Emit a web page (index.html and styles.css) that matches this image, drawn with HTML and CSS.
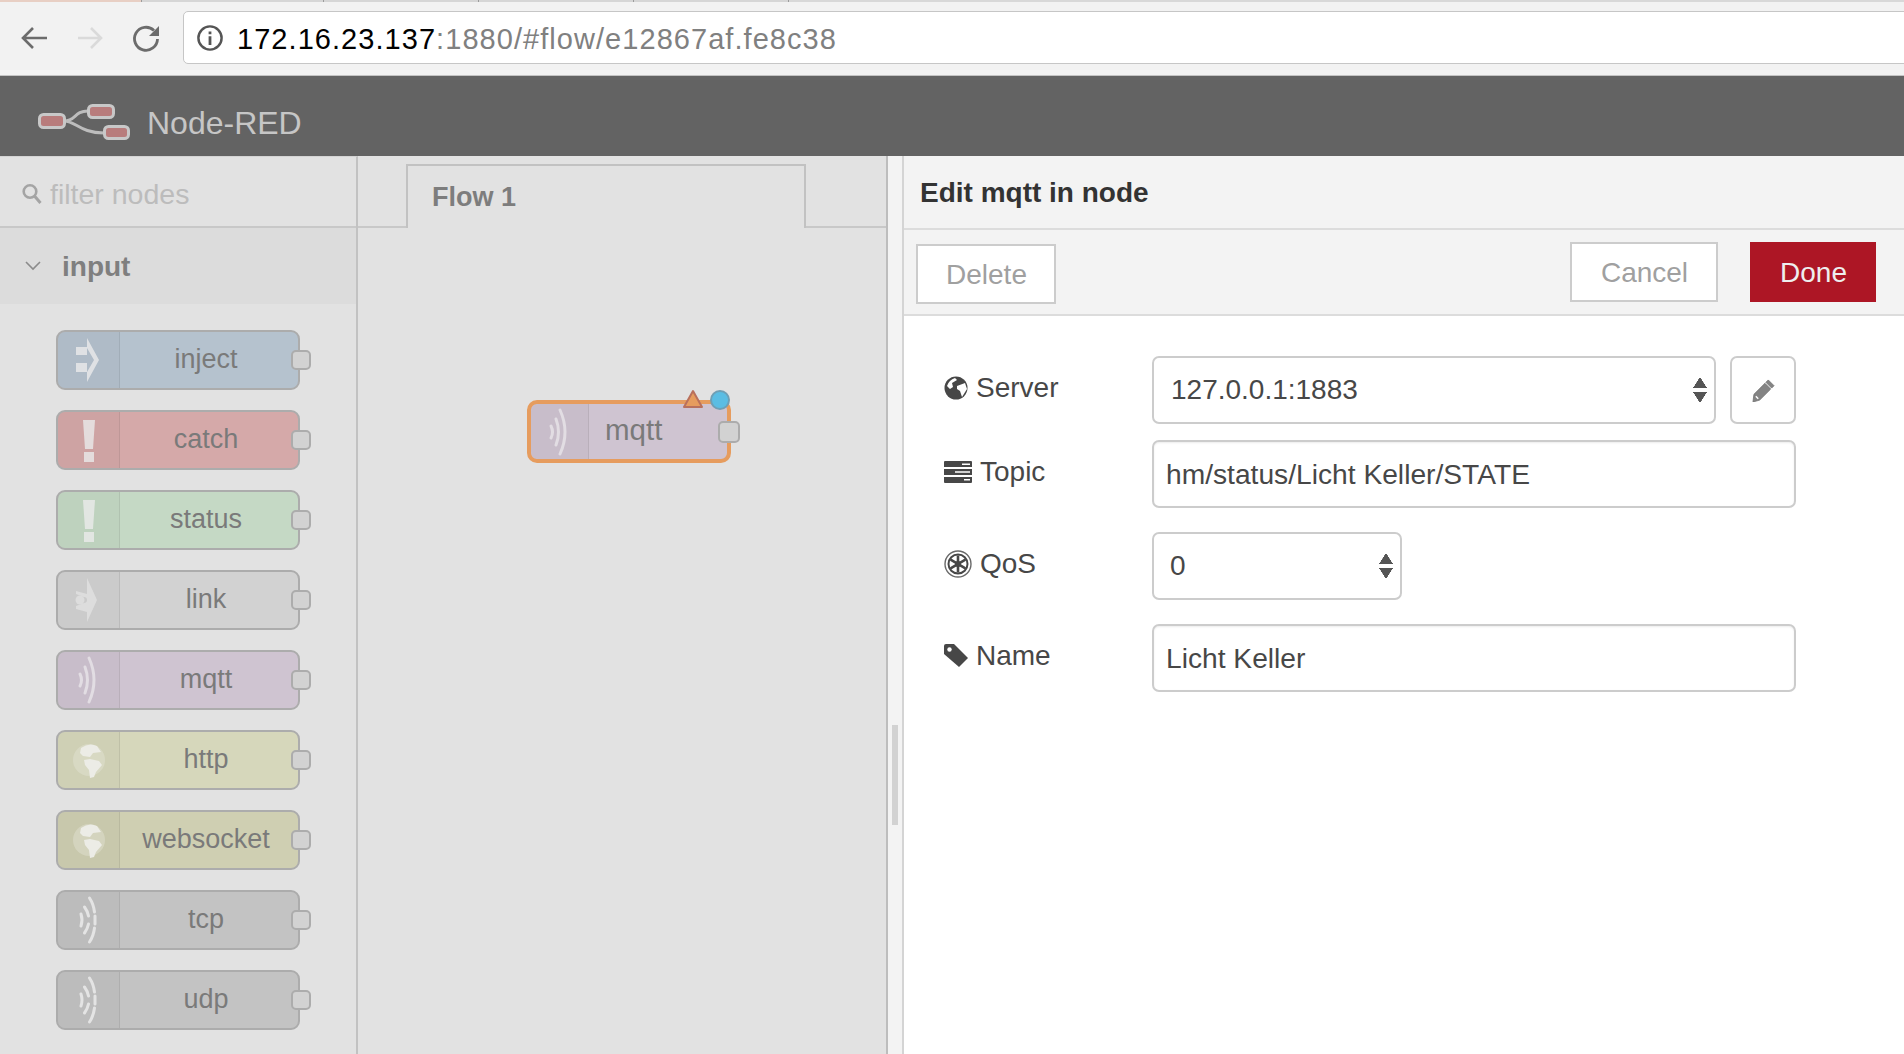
FILE: index.html
```html
<!DOCTYPE html>
<html lang="en">
  <head>
    <meta charset="UTF-8" />
    <title>Node-RED</title>
    <link rel="stylesheet" href="styles.css">
  </head>

  <body>
    <!-- browser chrome -->
    <div class="tab-strip">
      <span class="strip-tab strip-active"></span>
      <span class="strip-tab strip-wide"></span>
      <span class="strip-tab"></span>
      <span class="strip-tab"></span>
      <span class="strip-tab"></span>
    </div>
    <div class="browser-bar">
      <svg class="nav-icon" viewBox="0 0 32 32"><path d="M29 16H7M15 6 5 16l10 10" fill="none" stroke="#6c6c6c" stroke-width="2.600"/></svg>
      <svg class="nav-icon" viewBox="0 0 32 32"><path d="M4 16h22M17 6l10 10-10 10" fill="none" stroke="#dadada" stroke-width="2.600"/></svg>
      <svg class="nav-icon" viewBox="0 0 32 32"><path d="M24 8.500A11.500 11.500 0 1 0 27.500 17" fill="none" stroke="#6c6c6c" stroke-width="2.800"/><path d="M19 14h10V4z" fill="#6c6c6c"/></svg>
      <div class="url-box">
        <svg class="info-icon" viewBox="0 0 28 28"><circle cx="14" cy="14" r="12.500" fill="none" stroke="#555" stroke-width="2.600"/><path d="M12.500 7h3v3h-3zM12.500 12h3v9.500h-3z" fill="#555"/></svg>
        <span class="url-host">172.16.23.137</span><span class="url-rest">:1880/#flow/e12867af.fe8c38</span>
      </div>
    </div>

    <!-- node-red header -->
    <header class="app-header">
      <svg class="logo" viewBox="0 0 92 36">
        <path d="M26 17C38 17 36 7 50 7M26 17C38 17 42 29 66 29" fill="none" stroke="#bdbdbd" stroke-width="3"/>
        <rect x="1.500" y="10.500" width="25" height="13" rx="4" fill="#b87c7c" stroke="#c8c8c8" stroke-width="3"/>
        <rect x="50.500" y="1.500" width="25" height="12" rx="4" fill="#b87c7c" stroke="#c8c8c8" stroke-width="3"/>
        <rect x="66.500" y="22.500" width="24" height="12" rx="4" fill="#b87c7c" stroke="#c8c8c8" stroke-width="3"/>
      </svg>
      <span class="app-title">Node-RED</span>
    </header>

    <main class="app-main">
      <!-- palette -->
      <aside class="palette">
        <div class="filter-row">
          <svg class="search-icon" viewBox="0 0 20 20"><circle cx="8" cy="8" r="6.300" fill="none" stroke="#a4a4a4" stroke-width="2.600"/><path d="M12.500 12.500l6 7" stroke="#a4a4a4" stroke-width="3"/></svg>
          <span class="filter-text">filter nodes</span>
        </div>
        <div class="category">
          <svg class="chevron" viewBox="0 0 16 10"><path d="M1 1l7 7 7-7" fill="none" stroke="#8b8b8b" stroke-width="1.600"/></svg>
          <span class="category-name">input</span>
        </div>
        <div class="node-list">
          <div class="node node-inject">
            <div class="node-icon"><svg viewBox="0 0 40 50"><path d="M7 12h11v8H7zM7 28h11v9H7zM18 3 30 25 18 47V37l7-12-7-12z" fill="#dfe1e4"/></svg></div>
            <span class="node-label">inject</span><span class="port"></span>
          </div>
          <div class="node node-catch">
            <div class="node-icon"><svg viewBox="0 0 40 50"><path d="M14 5h12l-2 29h-8zM15 37h10v10H15z" fill="#e4dcdc"/></svg></div>
            <span class="node-label">catch</span><span class="port"></span>
          </div>
          <div class="node node-status">
            <div class="node-icon"><svg viewBox="0 0 40 50"><path d="M14 5h12l-2 29h-8zM15 37h10v10H15z" fill="#e2e6e2"/></svg></div>
            <span class="node-label">status</span><span class="port"></span>
          </div>
          <div class="node node-link">
            <div class="node-icon"><svg viewBox="0 0 40 50"><path d="M18 3 28 25 18 47V37L7 34v-3l8-3a3 3 0 0 0 0-6l-8-3v-3l11 3z" fill="#dddddd"/><circle cx="11" cy="25" r="4.500" fill="#dddddd"/></svg></div>
            <span class="node-label">link</span><span class="port"></span>
          </div>
          <div class="node node-mqtt">
            <div class="node-icon"><svg viewBox="0 0 40 50"><path d="M11 19q3 6 0 12M16 12q5 13 0 26M20 3q10 22 0 44" fill="none" stroke="#e2dde3" stroke-width="3" stroke-linecap="round"/></svg></div>
            <span class="node-label">mqtt</span><span class="port"></span>
          </div>
          <div class="node node-http">
            <div class="node-icon"><svg viewBox="0 0 40 50"><circle cx="20" cy="25" r="16" fill="#e6e6da" opacity=".4"/><path d="M12 13q8-6 16-2l4 6-8 1-3 4-7-1-3-3zM15 25l6-1 9 2 3 4-6 7-2 5-4 1-1-8-4-5z" fill="#ecece6"/></svg></div>
            <span class="node-label">http</span><span class="port"></span>
          </div>
          <div class="node node-websocket">
            <div class="node-icon"><svg viewBox="0 0 40 50"><circle cx="20" cy="25" r="16" fill="#e6e6da" opacity=".4"/><path d="M12 13q8-6 16-2l4 6-8 1-3 4-7-1-3-3zM15 25l6-1 9 2 3 4-6 7-2 5-4 1-1-8-4-5z" fill="#ecece6"/></svg></div>
            <span class="node-label">websocket</span><span class="port"></span>
          </div>
          <div class="node node-tcp">
            <div class="node-icon"><svg viewBox="0 0 40 50"><path d="M12 19q2 6 0 12M15.500 12q3 4 4 9M19.500 29q-1 5-4 9M20.500 3q4 6 5 14M26 21v8M25.500 33q-1 8-5 14" fill="none" stroke="#e4e4e4" stroke-width="3" stroke-linecap="round"/></svg></div>
            <span class="node-label">tcp</span><span class="port"></span>
          </div>
          <div class="node node-tcp">
            <div class="node-icon"><svg viewBox="0 0 40 50"><path d="M12 19q2 6 0 12M15.500 12q3 4 4 9M19.500 29q-1 5-4 9M20.500 3q4 6 5 14M26 21v8M25.500 33q-1 8-5 14" fill="none" stroke="#e4e4e4" stroke-width="3" stroke-linecap="round"/></svg></div>
            <span class="node-label">udp</span><span class="port"></span>
          </div>
        </div>
      </aside>

      <!-- workspace -->
      <section class="workspace">
        <div class="tab-row">
          <div class="flow-tab">Flow 1</div>
        </div>
        <div class="canvas">
          <div class="canvas-node">
            <div class="canvas-icon"><svg viewBox="0 0 40 50"><path d="M11 19q3 6 0 12M16 12q5 13 0 26M20 3q10 22 0 44" fill="none" stroke="#e2dde3" stroke-width="3" stroke-linecap="round"/></svg></div>
            <span class="canvas-label">mqtt</span>
            <span class="canvas-port"></span>
            <svg class="badge-changed" viewBox="0 0 22 20"><path d="M11 2 20 18H2z" fill="#e69c5e" stroke="#b9705c" stroke-width="2" stroke-linejoin="round"/></svg>
            <span class="badge-deployed"></span>
          </div>
        </div>
      </section>

      <div class="separator"><span class="grip"></span></div>

      <!-- edit panel -->
      <section class="editor">
        <div class="editor-title">Edit mqtt in node</div>
        <div class="editor-toolbar">
          <button class="btn btn-delete">Delete</button>
          <div class="toolbar-right">
            <button class="btn">Cancel</button>
            <button class="btn btn-done">Done</button>
          </div>
        </div>
        <form class="editor-form">
          <div class="form-row row-server">
            <label class="form-label">
              <svg class="label-icon" viewBox="0 0 24 24"><circle cx="12" cy="12" r="11.500" fill="#474747"/><path d="M3 10q2-6 8-8l2 2-5 3 1 4-3 2zM13 10l8-3 2 6-5 8-2-6-3-2z" fill="#fff"/></svg>
              Server
            </label>
            <div class="select-box select-wide">127.0.0.1:1883<span class="arrows"></span></div>
            <button class="edit-btn" type="button"><svg viewBox="0 0 24 24"><path d="M17 1l6 6-2.500 2.500-6-6zM13.500 4.500l6 6L8 22l-7 2 1-8z" fill="#848484" stroke="#6f6f6f" stroke-width=".8"/><path d="M4 18l2.500 2.500" stroke="#fff" stroke-width="1.500"/></svg></button>
          </div>
          <div class="form-row row-topic">
            <label class="form-label">
              <svg class="label-icon icon-wide" viewBox="0 0 28 22"><path d="M0 1q0-1 1-1h26q1 0 1 1v5H0zM0 8h28v6H0zM0 16h28v5q0 1-1 1H1q-1 0-1-1z" fill="#474747"/><path d="M18 2.500h8V4h-8zM11 10.300h15v1.500H11zM20 18h6v1.500h-6z" fill="#fff"/></svg>
              Topic
            </label>
            <div class="text-box">hm/status/Licht Keller/STATE</div>
          </div>
          <div class="form-row row-qos">
            <label class="form-label">
              <svg class="label-icon icon-qos" viewBox="0 0 28 28"><circle cx="14" cy="14" r="13" fill="none" stroke="#6a6a6a" stroke-width="1.400"/><circle cx="14" cy="14" r="9.500" fill="none" stroke="#474747" stroke-width="2"/><path d="M14 5.500v17M6.600 9.700l14.800 8.600M21.400 9.700 6.600 18.300" stroke="#474747" stroke-width="2.600"/><circle cx="14" cy="14" r="3" fill="#474747"/></svg>
              QoS
            </label>
            <div class="select-box select-small">0<span class="arrows"></span></div>
          </div>
          <div class="form-row row-name">
            <label class="form-label">
              <svg class="label-icon" viewBox="0 0 24 24"><path d="M0 2q0-2 2-2h8l14 14-9 9L0 10z" fill="#474747"/><circle cx="5.500" cy="5.500" r="2.200" fill="#fff"/></svg>
              Name
            </label>
            <div class="text-box">Licht Keller</div>
          </div>
        </form>
      </section>
    </main>
  </body>
</html>
```
FILE: styles.css
```css
* {
  box-sizing: border-box;
}

html,
body {
  height: 100%;
}

body {
  font-family: "Liberation Sans", Arial, sans-serif;
  margin: 0;
  background-color: #fff;
  overflow: hidden;
  display: flex;
  flex-direction: column;
}

/* browser chrome */
.tab-strip {
  display: flex;
  height: 2px;
  background-color: #d8d8d8;
  flex: none;
}

.strip-tab {
  width: 155px;
  border-right: 1px solid #9c9c9c;
  background-color: #d6d6d6;
}

.strip-active {
  width: 142px;
  background-color: #e8cfc4;
}

.strip-wide {
  width: 182px;
}

.browser-bar {
  display: flex;
  align-items: center;
  height: 74px;
  flex: none;
  padding: 0 0 2px 18px;
  background-color: #f2f2f2;
  border-bottom: 1px solid #c4c4c4;
}

.nav-icon {
  width: 32px;
  height: 32px;
  margin-right: 24px;
  flex: none;
}

.url-box {
  display: flex;
  align-items: center;
  flex: 1;
  height: 53px;
  margin-left: -3px;
  margin-right: -10px;
  padding: 3px 0 0 13px;
  background-color: #fff;
  border: 1px solid #c6c6c6;
  border-radius: 5px;
  font-size: 29px;
  letter-spacing: 1.050px;
}

.info-icon {
  width: 26px;
  height: 26px;
  margin: -3px 14px 0 0;
}

.url-host {
  color: #000;
}

.url-rest {
  color: #808080;
}

/* app header */
.app-header {
  display: flex;
  align-items: center;
  height: 80px;
  flex: none;
  padding: 11px 0 0 38px;
  background-color: #636363;
}

.logo {
  width: 92px;
  height: 36px;
  margin-right: 17px;
}

.app-title {
  padding-top: 3px;
  color: #c6c6c6;
  font-size: 32px;
}

.app-main {
  display: flex;
  flex: 1;
  min-height: 0;
  background-color: #e2e2e2;
}

/* palette */
.palette {
  width: 358px;
  flex: none;
  border-right: 2px solid #c2c2c2;
  border-top: 1px solid #d4d4d4;
}

.filter-row {
  display: flex;
  align-items: center;
  height: 71px;
  padding: 3px 0 0 22px;
  border-bottom: 2px solid #c8c8c8;
}

.search-icon {
  width: 20px;
  height: 21px;
  margin-right: 8px;
}

.filter-text {
  padding-top: 2px;
  color: #bcbcbc;
  font-size: 28.500px;
}

.category {
  display: flex;
  align-items: center;
  height: 76px;
  padding-left: 25px;
  background-color: #dcdcdc;
}

.chevron {
  width: 16px;
  height: 10px;
  margin-right: 21px;
}

.category-name {
  padding-top: 2px;
  color: #7f7f7f;
  font-size: 28px;
  font-weight: bold;
}

.node-list {
  display: flex;
  flex-direction: column;
  gap: 20px;
  padding: 26px 0 0 56px;
}

.node {
  position: relative;
  display: flex;
  align-items: center;
  width: 244px;
  height: 60px;
  border: 2px solid #acacac;
  border-radius: 9px;
}

.node-icon {
  display: flex;
  align-items: center;
  justify-content: center;
  width: 62px;
  height: 100%;
  flex: none;
  border-right: 1px solid rgba(0, 0, 0, 0.08);
  background-color: rgba(0, 0, 0, 0.03);
  border-radius: 7px 0 0 7px;
}

.node-icon svg {
  width: 40px;
  height: 50px;
}

.node-label {
  flex: 1;
  padding: 0 6px 1px 0;
  text-align: center;
  color: #7a7a7a;
  font-size: 27px;
}

.port {
  position: absolute;
  right: -13px;
  top: 18px;
  width: 20px;
  height: 20px;
  background-color: #d2d2d2;
  border: 2px solid #acacac;
  border-radius: 5px;
}

.node-inject { background-color: #b5c2ce; }
.node-catch { background-color: #d5a9a9; }
.node-status { background-color: #c5d9c5; }
.node-link { background-color: #d2d2d2; }
.node-mqtt { background-color: #cfc4d1; }
.node-http { background-color: #d6d7bb; }
.node-websocket { background-color: #cfcfb2; }
.node-tcp { background-color: #c3c3c3; }

/* workspace */
.workspace {
  flex: 1;
  display: flex;
  flex-direction: column;
  min-width: 0;
  border-right: 2px solid #bdbdbd;
}

.tab-row {
  height: 72px;
  flex: none;
  padding: 8px 0 0 48px;
  border-bottom: 2px solid #c8c8c8;
}

.flow-tab {
  width: 400px;
  height: 64px;
  padding: 16px 0 0 24px;
  background-color: #e2e2e2;
  border: 2px solid #c2c2c2;
  border-bottom: none;
  color: #7d7d7d;
  font-size: 27px;
  font-weight: bold;
}

.canvas {
  position: relative;
  flex: 1;
}

.canvas-node {
  position: absolute;
  left: 169px;
  top: 172px;
  display: flex;
  align-items: center;
  width: 204px;
  height: 63px;
  background-color: #cfc4d1;
  border: 4px solid #e69c5e;
  border-radius: 10px;
}

.canvas-icon {
  display: flex;
  align-items: center;
  justify-content: center;
  width: 58px;
  height: 100%;
  flex: none;
  border-right: 1px solid rgba(0, 0, 0, 0.08);
  background-color: rgba(0, 0, 0, 0.03);
  border-radius: 7px 0 0 7px;
}

.canvas-icon svg {
  width: 40px;
  height: 50px;
}

.canvas-label {
  margin: 0 0 4px 16px;
  color: #7a7a7a;
  font-size: 29.500px;
}

.canvas-port {
  position: absolute;
  right: -13px;
  top: 17px;
  width: 22px;
  height: 22px;
  background-color: #d2d2d2;
  border: 2px solid #acacac;
  border-radius: 5px;
}

.badge-changed {
  position: absolute;
  left: 151px;
  top: -15px;
  width: 22px;
  height: 20px;
}

.badge-deployed {
  position: absolute;
  right: -3px;
  top: -14px;
  width: 20px;
  height: 20px;
  background-color: #5bbde3;
  border: 2px solid #6f9fb5;
  border-radius: 50%;
}

.separator {
  display: flex;
  align-items: center;
  width: 16px;
  flex: none;
  padding-left: 4px;
  background-color: #f3f3f3;
  border-right: 2px solid #d4d4d4;
}

.grip {
  width: 6px;
  height: 100px;
  margin-top: 340px;
  background-color: #d2d2d2;
}

/* edit panel */
.editor {
  width: 1000px;
  flex: none;
  background-color: #fff;
}

.editor-title {
  display: flex;
  align-items: center;
  height: 74px;
  padding: 2px 0 0 16px;
  background-color: #f3f3f3;
  border-bottom: 2px solid #dcdcdc;
  color: #333;
  font-size: 28px;
  font-weight: bold;
}

.editor-toolbar {
  display: flex;
  justify-content: space-between;
  height: 86px;
  padding: 12px 28px 0 12px;
  background-color: #f3f3f3;
  border-bottom: 2px solid #dcdcdc;
}

.toolbar-right {
  display: flex;
  gap: 32px;
}

.btn {
  width: 148px;
  height: 60px;
  padding: 2px 0 0 1px;
  background-color: #fff;
  border: 2px solid #ccc;
  color: #a0a0a0;
  font-family: inherit;
  font-size: 28px;
}

.btn-delete {
  width: 140px;
  margin-top: 2px;
}

.btn-done {
  width: 126px;
  background-color: #ad1625;
  border-color: #ad1625;
  color: #eee;
}

.editor-form {
  display: flex;
  flex-direction: column;
  padding: 40px 0 0 40px;
}

.form-row {
  display: flex;
}

.row-server {
  margin-bottom: 16px;
}

.row-topic,
.row-qos {
  margin-bottom: 24px;
}

.form-label {
  display: flex;
  align-items: center;
  gap: 8px;
  width: 208px;
  height: 64px;
  color: #474747;
  font-size: 28px;
}

.label-icon {
  width: 24px;
  height: 24px;
  flex: none;
}

.icon-wide {
  width: 28px;
  height: 22px;
}

.icon-qos {
  width: 28px;
  height: 28px;
}

.select-box,
.text-box {
  position: relative;
  display: flex;
  align-items: center;
  height: 68px;
  background-color: #fff;
  border: 2px solid #ccc;
  border-radius: 7px;
  color: #474747;
  font-size: 28px;
}

.select-box {
  padding-left: 17px;
}

.select-wide {
  width: 564px;
}

.select-small {
  width: 250px;
  padding-left: 16px;
}

.text-box {
  width: 644px;
  padding-left: 12px;
  font-size: 28.200px;
  box-shadow: inset 0 1px 2px rgba(0, 0, 0, 0.08);
}

.arrows {
  position: absolute;
  right: 7px;
  top: 19px;
  width: 14px;
  height: 26px;
  background:
    linear-gradient(to bottom right, transparent 49%, #555 51%) left top / 7px 11px no-repeat,
    linear-gradient(to bottom left, transparent 49%, #555 51%) right top / 7px 11px no-repeat,
    linear-gradient(to top right, transparent 49%, #555 51%) left bottom / 7px 11px no-repeat,
    linear-gradient(to top left, transparent 49%, #555 51%) right bottom / 7px 11px no-repeat;
}

.edit-btn {
  display: flex;
  align-items: center;
  justify-content: center;
  width: 66px;
  height: 68px;
  margin-left: 14px;
  padding: 0;
  background-color: #fff;
  border: 2px solid #ccc;
  border-radius: 7px;
}

.edit-btn svg {
  width: 23px;
  height: 23px;
}
```
